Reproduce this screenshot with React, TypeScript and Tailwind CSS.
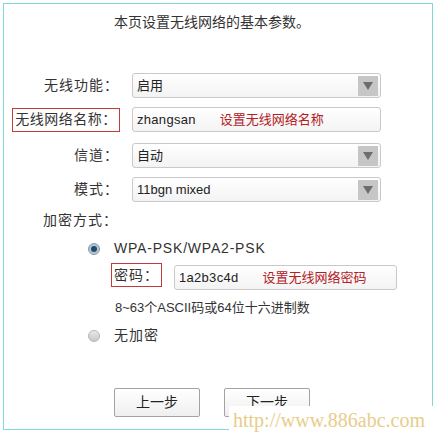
import React from 'react';

const font = { fontFamily: '"Liberation Sans", "Noto Sans CJK SC", sans-serif' };

function Arrow() {
  return (
    <div className="w-[20px] h-[20px] bg-[#c6c6c6] flex items-center justify-center mr-[2px]">
      <svg width="10" height="8" viewBox="0 0 10 8">
        <polygon points="0,0 10,0 5,8" fill="#6e6e6e" />
      </svg>
    </div>
  );
}

function Field({ children, select, w = 'w-[249px]' }: { children: React.ReactNode; select?: boolean; w?: string }) {
  return (
    <div className={`${w} h-[25px] border border-[#c9c9c9] rounded-[3px] bg-gradient-to-b from-white to-[#f3f3f3] flex items-center justify-between pl-[4px]`}>
      <div className="flex items-center text-[13px] text-[#222] whitespace-nowrap">{children}</div>
      {select && <Arrow />}
    </div>
  );
}

function Label({ text, boxed }: { text: string; boxed?: boolean }) {
  return (
    <div className="w-[108px] flex justify-end whitespace-nowrap">
      {boxed ? (
        <div className="w-[108px] h-[24px] border border-[#c43a3a] flex items-center justify-center text-[14px] text-[#333] tracking-[0.5px]">{text}</div>
      ) : (
        <div className="text-[14px] text-[#333] tracking-[1px] pr-[1px]">{text}</div>
      )}
    </div>
  );
}

function Radio({ on }: { on?: boolean }) {
  return on ? (
    <div className="w-[12px] h-[12px] rounded-full bg-[#b8c6d0] border border-[#8a9aa6] flex items-center justify-center">
      <div className="w-[6px] h-[6px] rounded-full bg-[#1e4d72]" />
    </div>
  ) : (
    <div className="w-[12px] h-[12px] rounded-full bg-gradient-to-b from-[#e8e8e8] to-[#c8c8c8] border border-[#b5b5b5]" />
  );
}

function Button({ text }: { text: string }) {
  return (
    <div className="w-[86px] h-[29px] border border-[#a3a3a3] rounded-[2px] bg-gradient-to-b from-white to-[#efefef] flex items-center justify-center text-[14px] text-[#222]">
      {text}
    </div>
  );
}

export default function App() {
  return (
    <div className="w-[438px] h-[433px] bg-white relative overflow-hidden" style={font}>
      <div className="ml-[3px] mt-[3px] w-[430px] h-[427px] border border-[#7fd9d6] flex flex-col">
        <div className="text-[14px] text-[#333] text-center pt-[8px] pr-[12px] leading-[20px]">本页设置无线网络的基本参数。</div>

        <div className="flex items-center pl-[8px] mt-[41px]">
          <Label text="无线功能：" />
          <div className="ml-[12px]"><Field select>启用</Field></div>
        </div>

        <div className="flex items-center pl-[8px] mt-[9px]">
          <Label text="无线网络名称：" boxed />
          <div className="ml-[12px]">
            <Field>
              <span className="text-[13px] tracking-[0.3px]">zhangsan</span>
              <span className="ml-[24px] text-[#b3201f] text-[13px]">设置无线网络名称</span>
            </Field>
          </div>
        </div>

        <div className="flex items-center pl-[8px] mt-[11px]">
          <Label text="信道：" />
          <div className="ml-[12px]"><Field select>自动</Field></div>
        </div>

        <div className="flex items-center pl-[8px] mt-[9px]">
          <Label text="模式：" />
          <div className="ml-[12px]"><Field select>11bgn mixed</Field></div>
        </div>

        <div className="pl-[39px] mt-[8px] text-[14px] text-[#333] tracking-[1px] leading-[20px]">加密方式：</div>

        <div className="flex items-center pl-[84px] mt-[8px]">
          <Radio on />
          <span className="ml-[14px] text-[14px] text-[#333] tracking-[0.8px]">WPA-PSK/WPA2-PSK</span>
        </div>

        <div className="flex items-start pl-[107px] mt-[4px]">
          <div className="h-[24px] border border-[#c43a3a] flex items-center px-[2px] text-[14px] text-[#333] tracking-[1px]">密码：</div>
          <div className="ml-[12px] mt-[2px]">
            <Field w="w-[223px]">
              <span className="text-[13px] tracking-[0.3px]">1a2b3c4d</span>
              <span className="ml-[24px] text-[#b3201f] text-[13px]">设置无线网络密码</span>
            </Field>
          </div>
        </div>

        <div className="pl-[111px] mt-[8px] text-[13px] text-[#333] leading-[20px]">8~63个ASCII码或64位十六进制数</div>

        <div className="flex items-center pl-[84px] mt-[7px]">
          <Radio />
          <span className="ml-[14px] text-[14px] text-[#333] tracking-[1px]">无加密</span>
        </div>

        <div className="flex pl-[110px] gap-[24px] mt-[42px]">
          <Button text="上一步" />
          <Button text="下一步" />
        </div>
      </div>

      <div
        className="absolute left-[229px] top-[406px] w-[209px] h-[27px] bg-white flex items-center pl-[4px] text-[20px] text-[#e8cd8a]"
        style={{ fontFamily: '"Liberation Serif", serif' }}
      >
        http://www.886abc.com
      </div>
    </div>
  );
}
